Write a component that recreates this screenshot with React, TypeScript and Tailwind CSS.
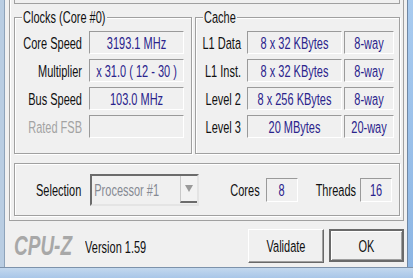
import type { ReactNode } from 'react'

// the screenshot is stretched vertically, so text is drawn 11px wide and scaled up
function T({ children, className = '' }: { children: ReactNode; className?: string }) {
  return <span className={`inline-block scale-y-[1.45] whitespace-pre ${className}`}>{children}</span>
}

function Field({ value, className = '' }: { value?: string; className?: string }) {
  return (
    <div
      className={`flex items-center justify-center border border-t-[#9a9a9a] border-l-[#9a9a9a] border-r-white border-b-white text-[#2a238c] ${className}`}
    >
      {value ? <T>{value}</T> : null}
    </div>
  )
}

function GroupBox({ title, className = '', children }: { title: string; className?: string; children: ReactNode }) {
  return (
    <div
      className={`relative border border-[#a0a0a0] shadow-[inset_1px_1px_0_#fff,1px_1px_0_#fff] ${className}`}
    >
      <div className="absolute -top-[8px] left-[7px] bg-[#f0f0f0] px-[1px] leading-[14px] text-[#111]">
        <T>{title}</T>
      </div>
      {children}
    </div>
  )
}

const CLOCKS = [
  { label: 'Core Speed', value: '3193.1 MHz' },
  { label: 'Multiplier', value: 'x 31.0 ( 12 - 30 )' },
  { label: 'Bus Speed', value: '103.0 MHz' },
  { label: 'Rated FSB', value: '', muted: true },
]

const CACHE = [
  { label: 'L1 Data', size: '8 x 32 KBytes', way: '8-way' },
  { label: 'L1 Inst.', size: '8 x 32 KBytes', way: '8-way' },
  { label: 'Level 2', size: '8 x 256 KBytes', way: '8-way' },
  { label: 'Level 3', size: '20 MBytes', way: '20-way' },
]

export default function App() {
  return (
    <div className="flex h-[278px] w-[413px] flex-col overflow-hidden bg-[#f0f0f0] font-['Liberation_Sans',Arial,sans-serif] text-[11px] leading-[14px] text-[#111]">
      <div className="flex h-[267px]">
        {/* left window frame */}
        <div className="w-[5px] border-r border-[#8ea3ba] bg-[#b9cde2]" />

        <div className="flex w-[402px] flex-col">
          {/* tab page */}
          <div className="ml-[4px] mr-[3px] flex h-[221px] flex-col border-x border-b border-[#a0a0a0] pl-[4px] pr-[3px] shadow-[inset_1px_0_0_#fff]">
            <div className="h-[4px] border-x border-b border-[#a0a0a0]" />

            <div className="mt-[13px] flex h-[137px] gap-[3px]">
              <GroupBox title="Clocks (Core #0)" className="w-[178px]">
                <div className="mt-[13px] grid grid-cols-[67px_95px] gap-x-[7px] gap-y-[5px]">
                  {CLOCKS.map((row) => (
                    <div key={row.label} className="contents">
                      <div className={`flex h-[23px] items-center justify-end ${row.muted ? 'text-[#a3a3a3]' : ''}`}>
                        <T>{row.label}</T>
                      </div>
                      <Field value={row.value} className="h-[23px]" />
                    </div>
                  ))}
                </div>
              </GroupBox>

              <GroupBox title="Cache" className="w-[205px]">
                <div className="mt-[13px] flex flex-col gap-[5px]">
                  {CACHE.map((row) => (
                    <div key={row.label} className="flex h-[23px]">
                      <div className="flex w-[45px] items-center justify-end">
                        <T>{row.label}</T>
                      </div>
                      <Field value={row.size} className="ml-[6px] w-[95px]" />
                      <Field value={row.way} className="ml-[2px] w-[50px]" />
                    </div>
                  ))}
                </div>
              </GroupBox>
            </div>

            <div className="mt-[9px] flex h-[53px] w-[386px] items-center border border-[#a0a0a0] pl-[21px] pr-[7px] shadow-[inset_1px_1px_0_#fff,1px_1px_0_#fff]">
              <T>Selection</T>
              <div className="ml-[9px] flex h-[32px] w-[109px] border-2 border-t-[#6b6b6b] border-l-[#6b6b6b] border-r-[#e4e4e4] border-b-[#e4e4e4]">
                <div className="flex flex-1 items-center pl-[2px] text-[#868a93]">
                  <T>Processor #1</T>
                </div>
                <div className="mb-[1px] flex w-[17px] items-center justify-center border-b-2 border-l border-b-[#6b6b6b] border-l-[#c8c8c8] bg-[#f2f2f2]">
                  <svg width="8" height="7" viewBox="0 0 8 7">
                    <path d="M0 0 H8 L4 7 Z" fill="#9a9a9a" />
                  </svg>
                </div>
              </div>

              <div className="ml-auto flex items-center">
                <T>Cores</T>
                <Field value="8" className="ml-[6px] h-[24px] w-[32px]" />
                <T className="ml-[18px]">Threads</T>
                <Field value="16" className="ml-[4px] h-[24px] w-[32px]" />
              </div>
            </div>
          </div>

          {/* footer */}
          <div className="flex h-[46px] items-center pl-[9px] pr-[3px] pt-[3px]">
            <T className="text-[19px] font-bold italic leading-[20px] text-[#a8a8a8]">CPU-Z</T>
            <T className="ml-[13px] mt-[3px]">Version 1.59</T>
            <button
              type="button"
              className="ml-auto flex h-[34px] w-[76px] items-center justify-center border border-t-white border-l-white border-b-[#696969] border-r-[#696969] bg-[#f0f0f0] shadow-[inset_-1px_-1px_0_#a0a0a0]"
            >
              <T>Validate</T>
            </button>
            <button
              type="button"
              className="ml-[5px] flex h-[33px] w-[75px] items-center justify-center border-2 border-[#6a6a6a] bg-[#f0f0f0] shadow-[inset_1px_1px_0_#fff,inset_-1px_-1px_0_#a0a0a0]"
            >
              <T>OK</T>
            </button>
          </div>
        </div>

        {/* right window frame */}
        <div className="flex-1 border-l border-[#6f87a4] bg-gradient-to-b from-[#a9cbef] to-[#8db6e4]" />
      </div>

      {/* bottom window frame */}
      <div className="flex-1 border-t border-[#7d92ab] bg-gradient-to-b from-[#c3d8ee] to-[#a8c6e8]" />
    </div>
  )
}
